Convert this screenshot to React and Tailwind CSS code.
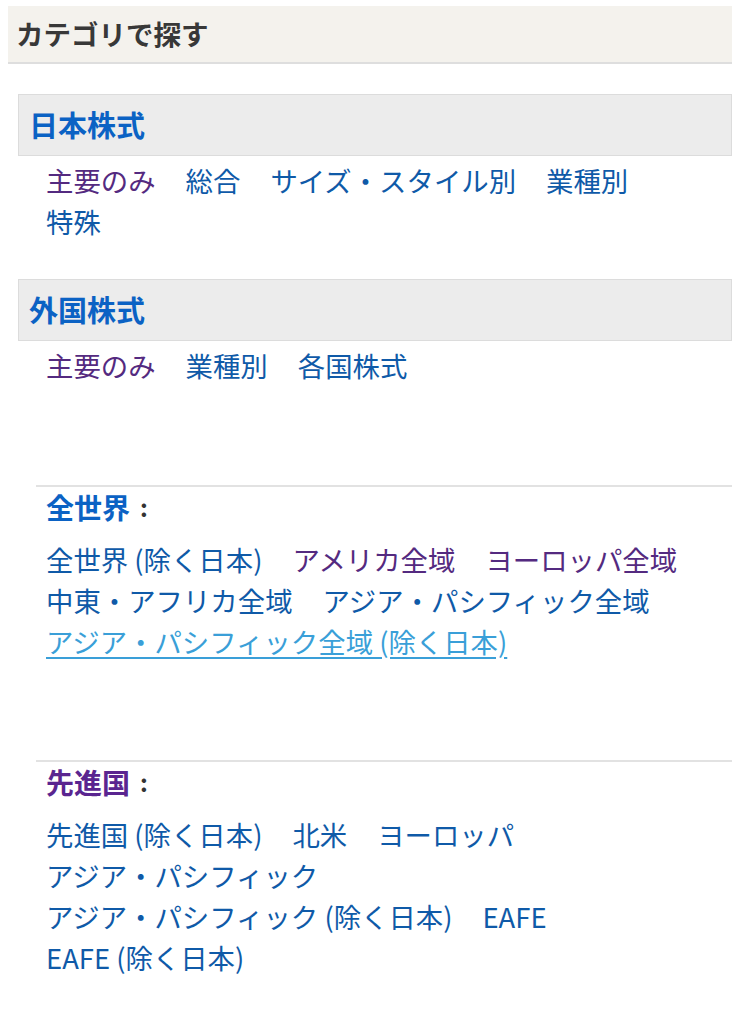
const font = { fontFamily: '"Noto Sans CJK JP", "Noto Sans", sans-serif' };

const blue = "text-[#0f5aa8]";
const purple = "text-[#542a80]";

const LinkRow = ({ items }) => (
  <div className="flex flex-wrap pl-[28px] pr-[8px] text-[27.4px] leading-[41px]">
    {items.map((it) => (
      <a
        key={it.label}
        href="#"
        className={
          "mr-[30px] whitespace-nowrap " +
          (it.visited ? purple : it.hover ? "text-[#3a9fd8] underline underline-offset-4" : blue)
        }
      >
        {it.label}
      </a>
    ))}
  </div>
);

const Section = ({ title, items }) => (
  <div className="ml-[18px]">
    <div className="border border-[#dcdcdc] bg-[#ececec] h-[62px] flex items-center pl-[10px]">
      <span className="text-[29px] font-bold text-[#0b62c4]">{title}</span>
    </div>
    <div className="mt-[4px]">
      <LinkRow items={items} />
    </div>
  </div>
);

const Region = ({ title, titleColor, items }) => (
  <div className="ml-[36px] border-t-2 border-[#e2e2e2]">
    <div className="pl-[10px] h-[40px] flex items-center">
      <span className={"text-[28px] font-bold " + titleColor}>{title}</span>
      <span className="text-[24px] font-bold text-[#333] ml-[10px]">:</span>
    </div>
    <div className="mt-[12px] -ml-[18px]">
      <LinkRow items={items} />
    </div>
  </div>
);

export default function App() {
  return (
    <div className="bg-white w-[740px] min-h-[1024px] pt-[6px] pr-[8px]" style={font}>
      <div className="ml-[8px] bg-[#f4f2ed] border-b-2 border-[#dedede] h-[58px] flex items-center pl-[8px]">
        <h2 className="text-[27.5px] font-bold text-[#383838]">カテゴリで探す</h2>
      </div>

      <div className="mt-[30px]">
        <Section
          title="日本株式"
          items={[
            { label: "主要のみ", visited: true },
            { label: "総合" },
            { label: "サイズ・スタイル別" },
            { label: "業種別" },
            { label: "特殊" },
          ]}
        />
      </div>

      <div className="mt-[37px]">
        <Section
          title="外国株式"
          items={[
            { label: "主要のみ", visited: true },
            { label: "業種別" },
            { label: "各国株式" },
          ]}
        />
      </div>

      <div className="mt-[99px]">
        <Region
          title="全世界"
          titleColor="text-[#0b62c4]"
          items={[
            { label: "全世界 (除く日本)" },
            { label: "アメリカ全域", visited: true },
            { label: "ヨーロッパ全域", visited: true },
            { label: "中東・アフリカ全域" },
            { label: "アジア・パシフィック全域" },
            { label: "アジア・パシフィック全域 (除く日本)", hover: true },
          ]}
        />
      </div>

      <div className="mt-[98px]">
        <Region
          title="先進国"
          titleColor="text-[#5a2590]"
          items={[
            { label: "先進国 (除く日本)" },
            { label: "北米" },
            { label: "ヨーロッパ" },
            { label: "アジア・パシフィック" },
            { label: "アジア・パシフィック (除く日本)" },
            { label: "EAFE" },
            { label: "EAFE (除く日本)" },
          ]}
        />
      </div>
    </div>
  );
}
